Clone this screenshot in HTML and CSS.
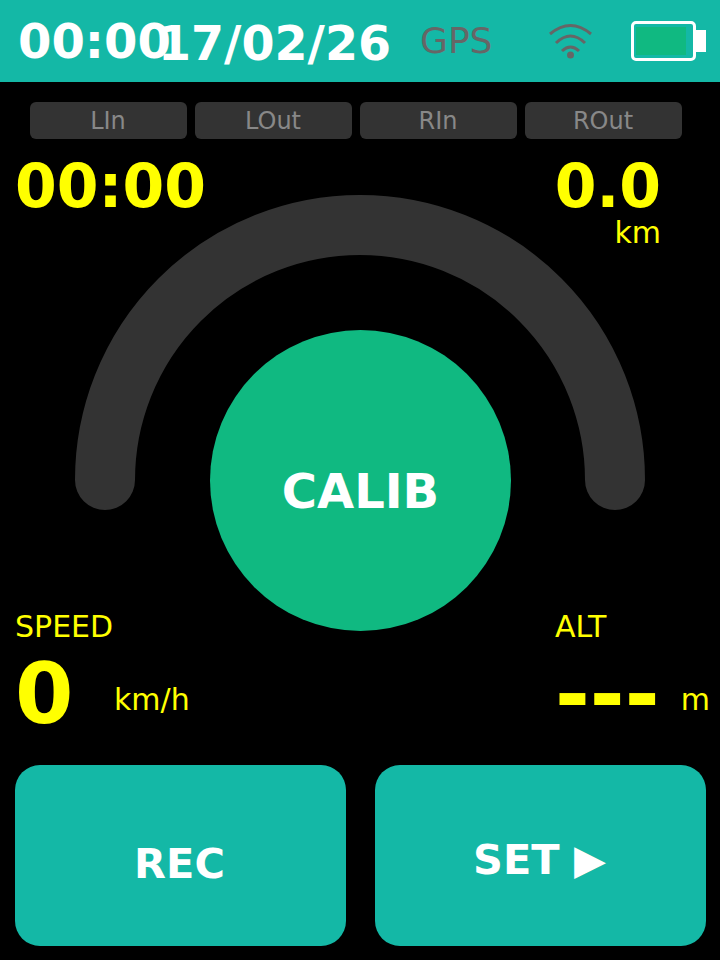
FILE: index.html
```html
<!DOCTYPE html>
<html>
  <head>
    <meta charset="utf-8" />
    <title>Dashboard</title>
    <link rel="stylesheet" href="styles.css">
  </head>
  <body>
    <div class="header">
      <div class="clock">00:00</div>
      <div class="date">17/02/26</div>
      <div class="gps">GPS</div>
      <svg class="wifi" width="50" height="40" viewBox="0 0 50 40">
        <path d="M3 14 Q23.5 -3 44 14" />
        <path d="M9 23 Q23.5 9 38 23" />
        <path d="M15 31 Q23.5 23 32 31" />
        <circle cx="23.5" cy="35" r="3.5" />
      </svg>
      <div class="battery">
        <div class="battery-body"><div class="battery-level"></div></div>
        <div class="battery-tip"></div>
      </div>
    </div>

    <div class="channels">
      <div class="channel">LIn</div>
      <div class="channel">LOut</div>
      <div class="channel">RIn</div>
      <div class="channel">ROut</div>
    </div>

    <div class="main">
      <svg class="gauge" width="720" height="340" viewBox="0 0 720 340">
        <path d="M105 300 A255 255 0 0 1 615 300" />
      </svg>
      <button class="calib">CALIB</button>

      <div class="top-stats">
        <div class="big-time">00:00</div>
        <div class="distance">
          <div class="distance-value">0.0</div>
          <div class="distance-unit">km</div>
        </div>
      </div>

      <div class="readouts">
        <div class="readout">
          <div class="readout-label">SPEED</div>
          <div class="readout-row">
            <span class="speed-value">0</span>
            <span class="unit">km/h</span>
          </div>
        </div>
        <div class="readout readout-alt">
          <div class="readout-label">ALT</div>
          <div class="readout-row">
            <span class="alt-value">---</span>
            <span class="unit">m</span>
          </div>
        </div>
      </div>
    </div>

    <div class="actions">
      <button class="action rec">REC</button>
      <button class="action set">SET ▶</button>
    </div>
  </body>
</html>
```

FILE: styles.css
```css
* {
  box-sizing: border-box;
}
body {
  width: 720px;
  height: 960px;
  margin: 0;
  overflow: hidden;
  background-color: #000;
  color: #ff0;
  font-family: "DejaVu Sans", sans-serif;
}
.header {
  display: flex;
  align-items: center;
  height: 82px;
  padding-left: 18px;
  background-color: #14b8a6;
}
.clock {
  width: 140px;
  font-size: 48px;
  font-weight: bold;
  color: #fff;
  margin-top: -1px;
}
.date {
  width: 262px;
  font-size: 47.5px;
  font-weight: bold;
  color: #fff;
  white-space: nowrap;
  margin-top: 5px;
}
.gps {
  width: 127px;
  font-size: 36px;
  color: #666;
  margin-top: -1px;
}
.wifi {
  margin-top: -3px;
  fill: #666;
}
.wifi path {
  fill: none;
  stroke: #666;
  stroke-width: 3;
}
.battery {
  display: flex;
  align-items: center;
  margin-left: 34px;
  margin-top: -1px;
}
.battery-body {
  width: 65px;
  height: 40px;
  padding: 3px 7px 3px 2px;
  border: 3px solid #fff;
  border-radius: 5px;
}
.battery-level {
  width: 50px;
  height: 28px;
  background-color: #10b981;
}
.battery-tip {
  width: 10px;
  height: 22px;
  background-color: #fff;
}
.channels {
  display: flex;
  gap: 8px;
  padding: 20px 0 0 30px;
}
.channel {
  width: 157px;
  height: 37px;
  padding-right: 1px;
  border-radius: 6px;
  background-color: #333;
  color: #888;
  font-size: 24px;
  line-height: 38px;
  text-align: center;
}
.main {
  position: relative;
  height: 626px;
}
.gauge {
  position: absolute;
  top: 41px;
  left: 0;
}
.gauge path {
  fill: none;
  stroke: #333;
  stroke-width: 60;
  stroke-linecap: round;
}
.calib {
  position: absolute;
  top: 191px;
  left: 210px;
  width: 301px;
  height: 301px;
  padding: 20px 0 0;
  border: none;
  border-radius: 50%;
  background-color: #10b981;
  color: #fff;
  font-family: inherit;
  font-size: 48px;
  font-weight: bold;
}
.top-stats {
  position: relative;
  display: flex;
  justify-content: space-between;
  height: 470px;
  padding: 16px 59px 0 15px;
}
.big-time,
.distance-value {
  font-size: 60px;
  font-weight: bold;
  line-height: 62px;
}
.distance {
  text-align: right;
}
.distance-unit {
  font-size: 30px;
  line-height: 32px;
}
.readouts {
  position: relative;
  display: flex;
  justify-content: space-between;
  padding: 0 10px 0 15px;
}
.readout-label {
  font-size: 30px;
  line-height: 36px;
}
.readout-alt {
  width: 155px;
}
.readout-row {
  display: flex;
  align-items: center;
  height: 90px;
  padding-top: 8px;
}
.speed-value {
  width: 99px;
  font-size: 84px;
  font-weight: bold;
  line-height: 90px;
}
.alt-value {
  width: 126px;
  font-size: 84px;
  font-weight: bold;
  line-height: 90px;
}
.unit {
  margin-top: 10px;
  font-size: 30px;
}
.actions {
  display: flex;
  gap: 29px;
  padding-left: 15px;
}
.action {
  width: 331px;
  height: 181px;
  border: none;
  border-radius: 25px;
  background-color: #14b8a6;
  color: #fff;
  font-family: inherit;
  font-size: 41.5px;
  font-weight: bold;
}
.rec {
  padding: 15px 2px 0 0;
}
.set {
  padding: 8px 2px 0 0;
}
```
